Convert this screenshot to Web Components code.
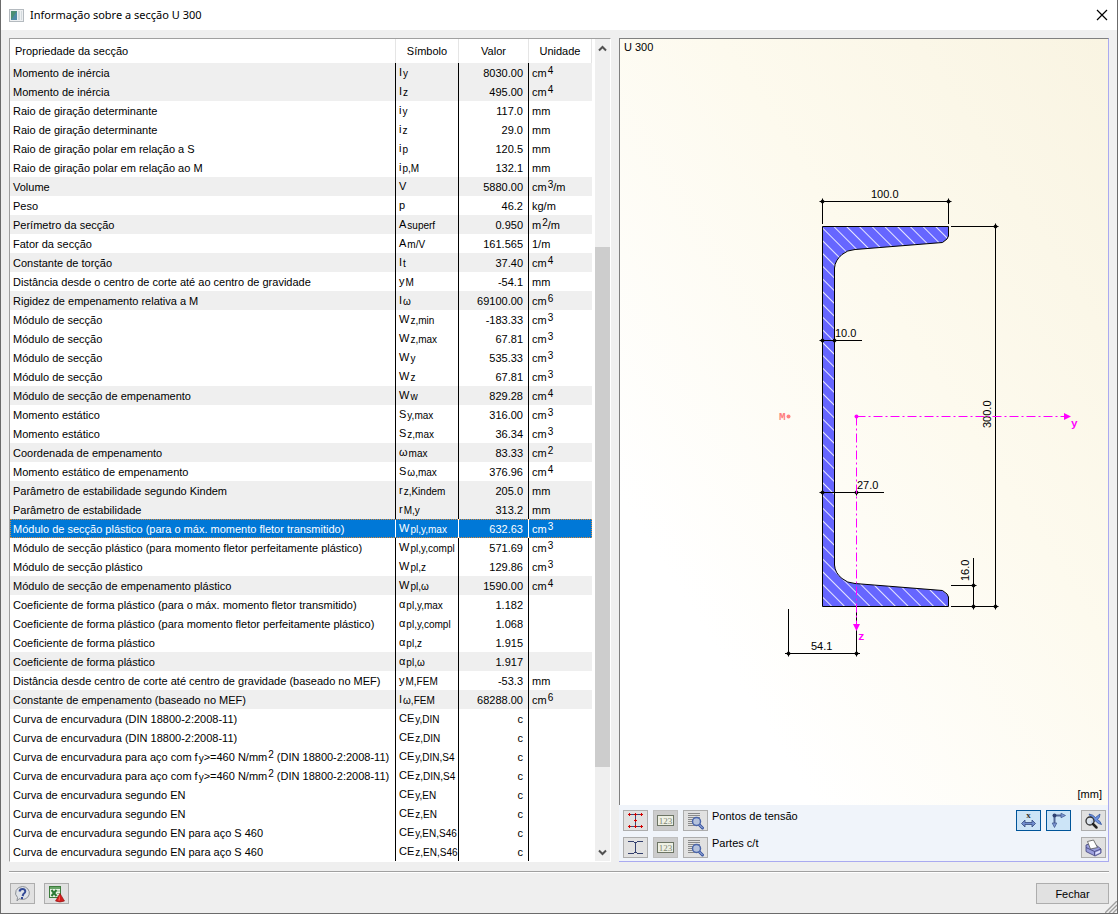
<!DOCTYPE html>
<html lang="pt">
<head>
<meta charset="utf-8">
<title>Informação sobre a secção U 300</title>
<style>
  html, body { height: 100%; }
  body { margin: 0; background: #efefef; color: #000; font: 11px/19px "Liberation Sans", Arial, sans-serif; }
</style>
</head>
<body>

<section-dialog heading="Informação sobre a secção U 300">
  <section-table slot="table"></section-table>
  <section-preview slot="preview" name="U 300" unit="[mm]"></section-preview>
  <tool-button slot="tools" label="Ajuda">
    <svg width="19" height="18" viewBox="0 0 19 18"><path d="M9.500 1.500a7 6.500 0 1 1-3.500 12.200L4 16l.5-3.500A7 6.500 0 0 1 9.500 1.500Z" fill="#dfe3e8" stroke="#8c9096"/><path d="M6.500 6.500Q7 4 9.500 4t2.800 2.200Q12.300 8 10.500 8.900L9.500 11" fill="none" stroke="#334a96" stroke-width="2"/><rect x="8" y="12" width="2" height="2" fill="#334a96"/></svg>
  </tool-button>
  <tool-button slot="tools" label="Exportar para Excel">
    <svg width="19" height="18" viewBox="0 0 19 18"><rect x="2.500" y="1.500" width="11" height="11" fill="#e8f2e4" stroke="#3d7d3d"/><rect x="3" y="2" width="10" height="2" fill="#68a568"/><path d="m4.500 5 5 6M9.500 5l-5 6" stroke="#2c7a35" stroke-width="2"/><path d="M10 6h3M10 8.500h3M10 11h3" stroke="#8dba88"/><path d="M13 8.500 17.500 16Q13 18 8.500 16Z" fill="#d41c1c" stroke="#871010" stroke-width=".6"/><path d="m12.800 10-1.500 5.500h1.500Z" fill="#ff6a60"/></svg>
  </tool-button>
</section-dialog>

<script>
/* Base class: opens a shadow root and fills it from the class's markup. */
class BaseElement extends HTMLElement {
  constructor() {
    super();
    this.attachShadow({ mode: "open" });
  }
  connectedCallback() {
    const template = document.createElement("template");
    template.innerHTML = this.markup();
    this.shadowRoot.replaceChildren(template.content.cloneNode(true));
  }
  markup() { return ""; }
}

/* Small square icon button; the icon is slotted in. */
class ToolButton extends BaseElement {
  markup() {
    const off = this.hasAttribute("disabled") ? "disabled" : "";
    const pressed = this.hasAttribute("pressed") ? 'aria-pressed="true"' : "";
    return `
      <style>
        :host { display: block; flex: none; }
        button { display: flex; align-items: center; justify-content: center; box-sizing: border-box; width: 25px; height: 21px; padding: 0; border: 1px solid #adadad; background: #e1e1e1; }
        button:disabled { background: #ccc; border-color: #bfbfbf; }
        button[aria-pressed] { background: #cce4f7; border-color: #005499; }
        ::slotted(svg) { display: block; }
      </style>
      <button type="button" aria-label="${this.getAttribute("label")}" ${pressed} ${off}><slot></slot></button>`;
  }
}
customElements.define("tool-button", ToolButton);

/* Vertical scroll bar beside the table. */
class ScrollRail extends BaseElement {
  markup() {
    return `
      <style>
        :host { display: grid; grid-template-rows: 19px minmax(0, 1fr) 17px; width: 15px; background: #efefef; }
        svg { display: block; margin: auto; }
        .track { display: grid; grid-template-rows: 189fr 521fr 77fr; }
        .thumb { grid-row: 2; background: #cdcdcd; }
      </style>
      <svg width="9" height="7" viewBox="0 0 9 7"><path d="M1 5.500 4.500 2 8 5.500" fill="none" stroke="#505050" stroke-width="2"/></svg>
      <div class="track"><div class="thumb"></div></div>
      <svg width="9" height="7" viewBox="0 0 9 7"><path d="M1 1.500 4.500 5 8 1.500" fill="none" stroke="#505050" stroke-width="2"/></svg>`;
  }
}
customElements.define("scroll-rail", ScrollRail);

/* name | symbol | value | unit | flags: g = grey band, s = selected.
   "_{…}" lowers and "^{…}" raises a run of text. */
const ROWS = `
Momento de inércia|I_{y}|8030.00|cm^{4}|g
Momento de inércia|I_{z}|495.00|cm^{4}|g
Raio de giração determinante|i_{y}|117.0|mm|
Raio de giração determinante|i_{z}|29.0|mm|
Raio de giração polar em relação a S|i_{p}|120.5|mm|
Raio de giração polar em relação ao M|i_{p,M}|132.1|mm|
Volume|V|5880.00|cm^{3}/m|g
Peso|p|46.2|kg/m|
Perímetro da secção|A_{superf}|0.950|m^{2}/m|g
Fator da secção|A_{m/V}|161.565|1/m|
Constante de torção|I_{t}|37.40|cm^{4}|g
Distância desde o centro de corte até ao centro de gravidade|y_{M}|-54.1|mm|
Rigidez de empenamento relativa a M|I_{ω}|69100.00|cm^{6}|g
Módulo de secção|W_{z,min}|-183.33|cm^{3}|
Módulo de secção|W_{z,max}|67.81|cm^{3}|
Módulo de secção|W_{y}|535.33|cm^{3}|
Módulo de secção|W_{z}|67.81|cm^{3}|
Módulo de secção de empenamento|W_{w}|829.28|cm^{4}|g
Momento estático|S_{y,max}|316.00|cm^{3}|
Momento estático|S_{z,max}|36.34|cm^{3}|
Coordenada de empenamento|ω_{max}|83.33|cm^{2}|g
Momento estático de empenamento|S_{ω,max}|376.96|cm^{4}|
Parâmetro de estabilidade segundo Kindem|r_{z,Kindem}|205.0|mm|g
Parâmetro de estabilidade|r_{M,y}|313.2|mm|g
Módulo de secção plástico (para o máx. momento fletor transmitido)|W_{pl,y,max}|632.63|cm^{3}|s
Módulo de secção plástico (para momento fletor perfeitamente plástico)|W_{pl,y,compl}|571.69|cm^{3}|
Módulo de secção plástico|W_{pl,z}|129.86|cm^{3}|
Módulo de secção de empenamento plástico|W_{pl,ω}|1590.00|cm^{4}|g
Coeficiente de forma plástico (para o máx. momento fletor transmitido)|α_{pl,y,max}|1.182||
Coeficiente de forma plástico (para momento fletor perfeitamente plástico)|α_{pl,y,compl}|1.068||
Coeficiente de forma plástico|α_{pl,z}|1.915||
Coeficiente de forma plástico|α_{pl,ω}|1.917||g
Distância desde centro de corte até centro de gravidade (baseado no MEF)|y_{M,FEM}|-53.3|mm|
Constante de empenamento (baseado no MEF)|I_{ω,FEM}|68288.00|cm^{6}|g
Curva de encurvadura (DIN 18800-2:2008-11)|CE_{y,DIN}|c||
Curva de encurvadura (DIN 18800-2:2008-11)|CE_{z,DIN}|c||
Curva de encurvadura para aço com f_{y}>=460 N/mm^{2} (DIN 18800-2:2008-11)|CE_{y,DIN,S4}|c||
Curva de encurvadura para aço com f_{y}>=460 N/mm^{2} (DIN 18800-2:2008-11)|CE_{z,DIN,S4}|c||
Curva de encurvadura segundo EN|CE_{y,EN}|c||
Curva de encurvadura segundo EN|CE_{z,EN}|c||
Curva de encurvadura segundo EN para aço S 460|CE_{y,EN,S46}|c||
Curva de encurvadura segundo EN para aço S 460|CE_{z,EN,S46}|c||`.trim().split("\n").map(line => line.split("|"));

const format = text => text
  .replace(/>/g, "&gt;")
  .replace(/_\{(.*?)\}/g, "<sub>$1</sub>")
  .replace(/\^\{(.*?)\}/g, "<sup>$1</sup>");

class SectionTable extends BaseElement {
  markup() {
    const body = ROWS.map(([name, symbol, value, unit, flag]) => `
      <tr class="${flag}"${flag === "s" ? ' aria-selected="true"' : ""}><td><div>${format(name)}</div></td><td class="sym"><div>${format(symbol)}</div></td><td class="num"><div>${value}</div></td><td><div>${format(unit)}</div></td></tr>`).join("");
    return `
      <style>
        :host { display: grid; grid-template-columns: minmax(0, 1fr) 15px; column-gap: 3px; box-sizing: border-box; background: #fff; border-top: 1px solid #a0a0a0; border-left: 1px solid #a0a0a0; border-right: 1px solid #fff; border-bottom: 1px solid #fff; }
        table { width: 100%; border-collapse: separate; border-spacing: 0; table-layout: fixed; }
        col.symbol { width: 63px; } col.value { width: 70px; } col.unit { width: 63px; }
        th { height: 24px; padding: 0; font-weight: 400; text-align: center; border-right: 1px solid #e5e5e5; }
        th:first-child { text-align: left; padding-left: 5px; }
        td { height: 19px; padding: 0 3px; border-right: 1px solid #000; white-space: nowrap; }
        td:first-child, td:last-child { padding-right: 0; }
        td:last-child { border-right: 0; }
        td div { height: 19px; line-height: 21px; }
        td.sym { padding-right: 0; }
        td.sym div { line-height: 19px; }
        td.num { text-align: right; padding-right: 5px; }
        .g td { background: #efefef; }
        .s td { background: #0078d7; color: #fff; border-right-color: #fff; }
        .s { outline: 1px dotted #d98a3c; outline-offset: -1px; }
        sub, sup { font-size: 10px; line-height: 1; margin-left: 1px; vertical-align: baseline; position: relative; }
        sub { top: 1px; }
        sup { top: -3px; }
      </style>
      <table>
        <colgroup><col><col class="symbol"><col class="value"><col class="unit"></colgroup>
        <thead><tr><th scope="col">Propriedade da secção</th><th scope="col">Símbolo</th><th scope="col">Valor</th><th scope="col">Unidade</th></tr></thead>
        <tbody>${body}</tbody>
      </table>
      <scroll-rail></scroll-rail>`;
  }
}
customElements.define("section-table", SectionTable);

/* Dimensioned drawing of the channel section. */
class SectionDrawing extends BaseElement {
  markup() {
    const tick = (x, y) => `<path d="M${x - 3} ${y}h6M${x} ${y - 3}v6"/><circle cx="${x}" cy="${y}" r="1.500" fill="#000"/>`;
    const ticks = [[822.5, 201.5], [948.5, 201.5], [995.5, 226.5], [995.5, 606.5], [973.5, 585.5], [973.5, 606.5],
      [822.5, 340.5], [834.5, 340.5], [822.5, 492.5], [856.5, 492.5], [788.5, 653.5], [856.5, 653.5]].map(p => tick(...p)).join("");
    return `
      <style>
        :host { display: block; background: linear-gradient(to top right, #ffffff 20%, #fdfaee 60%, #f9f4e2); }
        svg { display: block; width: 100%; height: auto; }
        text { font: 11px "Liberation Sans", Arial, sans-serif; }
        .axis text { font: bold 11px "Liberation Mono", "Courier New", monospace; }
      </style>
      <svg viewBox="620 39 488 766">
        <defs>
          <pattern id="hatch" width="9" height="9" patternUnits="userSpaceOnUse" patternTransform="translate(834.5 226.5) rotate(45)">
            <path d="M0 .5h9" stroke="#e6e6ff"/>
          </pattern>
          <path id="profile" d="M822.5 226.5h126v9.500l-1.500 3-4.500 3.500L855 249.500q-8 .5-13 5-7 6-7.500 13.500v297q.5 8 7.500 13.500 5 4.500 13 5l87.500 7 4.500 3.500 1.500 3v9.500h-126Z"/>
        </defs>
        <use href="#profile" fill="#6666ff"/>
        <use href="#profile" fill="url(#hatch)" stroke="#000"/>
        <g fill="none" stroke="#000">
          <path d="M820 201.500h131M822.500 202v22M948.500 202v22"/>
          <path d="M995.500 224v385M951 226.500h47M951 606.500h47"/>
          <path d="M973.500 558v51M951 585.500h25"/>
          <path d="M820 340.500h42M820 492.500h64"/>
          <path d="M788.500 609v47M856.500 607v49M785 653.500h75"/>
          ${ticks}
        </g>
        <text x="871" y="198">100.0</text>
        <text x="835" y="337">10.0</text>
        <text x="857" y="489">27.0</text>
        <text x="811" y="650">54.1</text>
        <text transform="translate(991 428) rotate(-90)">300.0</text>
        <text transform="translate(969 581) rotate(-90)">16.0</text>
        <g class="axis" fill="#ff00ff">
          <path d="M856.500 416.500H1065M856.500 416.500V625" fill="none" stroke="#ff00ff" stroke-dasharray="9 3 2 3"/>
          <circle cx="856.500" cy="416.500" r="2"/>
          <path d="M1064 413l7 3.500-7 3.500ZM853 624h7l-3.500 7Z"/>
          <text x="1071" y="427">y</text>
          <text x="858" y="640">z</text>
          <text x="779" y="420" fill="#ff8080">M</text>
          <circle cx="788.500" cy="416.500" r="2" fill="#ff8080"/>
        </g>
      </svg>`;
  }
}
customElements.define("section-drawing", SectionDrawing);

const ICONS = {
  points: `<svg width="17" height="17" viewBox="0 0 17 17"><path d="M1 2.500h15M1 14.500h15M8.500 2.500v12" stroke="#3a4a78" fill="none"/><path d="M1 2.500h3M2.500 1v3M7 2.500h3M8.500 1v3M13 2.500h3M14.500 1v3M1 14.500h3M2.500 13v3M7 14.500h3M8.500 13v3M13 14.500h3M14.500 13v3M7 8.500h3M8.500 7v3" stroke="#d00000"/></svg>`,
  parts: `<svg width="17" height="17" viewBox="0 0 17 17"><path d="M1 2.500h6M10 2.500h6M1 14.500h6M10 14.500h6M7 3.500h3M7 13.500h3M8.500 3.500v10" stroke="#34406e" fill="none"/></svg>`,
  numbers: `<svg width="17" height="12" viewBox="0 0 17 12"><rect x=".5" y=".5" width="16" height="10" fill="#eef0e4" stroke="#6c7464"/><text x="8.500" y="9" text-anchor="middle" font-family="Liberation Serif, serif" font-size="9" fill="#7c8474">123</text></svg>`,
  details: `<svg width="19" height="18" viewBox="0 0 19 18"><path d="M2 1.500h12M2 3.500h12M2 5.500h12M2 7.500h5M2 9.500h4M2 11.500h5M2 13.500h7" stroke="#8a8a8a"/><path d="m13.500 13 3 3" stroke="#3a55a0" stroke-width="3" stroke-linecap="round"/><path d="m13.500 13 3 3" stroke="#b9c8ee" stroke-linecap="round"/><circle cx="10.500" cy="9.500" r="4" fill="#b5c2dc" stroke="#4a65aa" stroke-width="1.500"/></svg>`,
  dims: `<svg width="17" height="17" viewBox="0 0 17 17"><text x="8.500" y="6" text-anchor="middle" font-family="Liberation Serif, serif" font-size="9" font-weight="700" fill="#333">x</text><path d="M1.500 11.500 5 8v2.500h7V8l3.500 3.500L12 15v-2.500H5V15Z" fill="#6f8ccd" stroke="#34497e" stroke-width=".8"/></svg>`,
  axes: `<svg width="17" height="17" viewBox="0 0 17 17"><path d="M4.500 3.500H12M4.500 3.500V12" stroke="#536898" stroke-width="2" fill="none"/><path d="M11 1.200 15.500 3.500 11 5.800ZM2.200 11h4.600l-2.300 4.500Z" fill="#7d97d3" stroke="#3b5189" stroke-width=".7"/><circle cx="4.500" cy="3.500" r="2" fill="#2f4273"/></svg>`,
  zoom: `<svg width="19" height="18" viewBox="0 0 19 18"><path d="M5 2q4 .5 6.500 3.500L16 2q0 3.500-2.500 5.500 3 1.500 4 5-3.500-.5-6-3.500L7 12q0-3.500 2.500-5Q6 5.500 5 2Z" fill="#6d91de" stroke="#2a4b96" stroke-width=".7"/><circle cx="6" cy="9" r="4" fill="#dbe4ee" fill-opacity=".8" stroke="#333" stroke-width="1.300"/><path d="m9 12 3.500 3.500" stroke="#222" stroke-width="2.500" stroke-linecap="round"/></svg>`,
  print: `<svg width="19" height="18" viewBox="0 0 19 18"><path d="m2 6 3-1 7 1 5 4v4l-6 3-9-4.500Z" fill="#9a9edc" stroke="#3d3f78" stroke-width=".8"/><path d="m2 8.500 8.500 4L17 10M10.500 12.500v4" fill="none" stroke="#3d3f78" stroke-width=".8"/><path d="M3.500 2.500 9.500 1l4 7.500L6.500 10Z" fill="#fff" stroke="#555" stroke-width=".8"/><path d="m11.500 13.500 4.500-2v2l-4.500 2Z" fill="#e4e6ff"/></svg>`
};

/* Preview panel: drawing on top, tool strip below. */
class SectionPreview extends BaseElement {
  markup() {
    return `
      <style>
        :host { display: flex; flex-direction: column; box-sizing: border-box; background: #f0f4fa; border-top: 1px solid #808080; border-right: 1px solid #aaaaf0; border-bottom: 1px solid #aaaaf0; }
        .canvas { position: relative; border-left: 1px solid #808080; flex: auto; }
        .name, .unit { position: absolute; line-height: 15px; }
        .name { top: 1px; left: 4px; }
        .unit { right: 6px; bottom: 3px; }
        .strip { display: flex; justify-content: space-between; padding: 5px 2px 3px 4px; }
        .left { display: grid; grid-template-columns: 25px 25px 24px auto; gap: 6px 5px; }
        .left span { line-height: 12px; }
        .right { display: grid; grid-template-columns: 25px 30px 25px; gap: 6px 5px; }
        .right :last-child { grid-column: 3; }
      </style>
      <div class="canvas">
        <section-drawing></section-drawing>
        <div class="name">${this.getAttribute("name")}</div>
        <div class="unit">${this.getAttribute("unit")}</div>
      </div>
      <div class="strip">
        <div class="left">
          <tool-button label="Mostrar pontos de tensão">${ICONS.points}</tool-button>
          <tool-button label="Numerar pontos de tensão" disabled>${ICONS.numbers}</tool-button>
          <tool-button label="Detalhes dos pontos de tensão">${ICONS.details}</tool-button>
          <span>Pontos de tensão</span>
          <tool-button label="Mostrar partes c/t">${ICONS.parts}</tool-button>
          <tool-button label="Numerar partes c/t" disabled>${ICONS.numbers}</tool-button>
          <tool-button label="Detalhes das partes c/t">${ICONS.details}</tool-button>
          <span>Partes c/t</span>
        </div>
        <div class="right">
          <tool-button label="Dimensões" pressed>${ICONS.dims}</tool-button>
          <tool-button label="Eixos" pressed>${ICONS.axes}</tool-button>
          <tool-button label="Ver tudo">${ICONS.zoom}</tool-button>
          <tool-button label="Imprimir">${ICONS.print}</tool-button>
        </div>
      </div>`;
  }
}
customElements.define("section-preview", SectionPreview);

/* Window frame with title bar, two panels and a footer. */
class SectionDialog extends BaseElement {
  markup() {
    return `
      <style>
        :host { display: flex; flex-direction: column; position: relative; box-sizing: border-box; min-height: 100%; border: 1px solid #6b6b6b; border-top: 0; background: #efefef; }
        header { display: flex; align-items: center; gap: 6px; height: 30px; padding: 0 8px; background: #fff; }
        h1 { margin: 0; flex: 1; font: 400 11px/30px "Noto Sans", "Segoe UI", sans-serif; }
        .close { width: 14px; height: 14px; padding: 0; border: 0; background: none; }
        .close svg, header svg { display: block; }
        main { display: grid; grid-template-columns: minmax(0, 602fr) minmax(0, 490fr); column-gap: 8px; padding: 8px 8px 9px; }
        footer { display: flex; gap: 9px; margin: 0 8px; padding: 11px 0 9px 1px; border-top: 1px solid #a0a0a0; box-shadow: inset 0 1px #fff; }
        .ok { margin-left: auto; box-sizing: border-box; width: 73px; height: 21px; padding: 0; border: 1px solid #adadad; background: #e1e1e1; color: #000; font: 11px "Liberation Sans", Arial, sans-serif; }
        .grip { position: absolute; right: 0; bottom: 0; }
      </style>
      <header>
        <svg width="15" height="13" viewBox="0 0 15 13"><rect x=".5" y=".5" width="14" height="12" fill="#eef0f2" stroke="#b4babf"/><rect x="2" y="2" width="6" height="9" fill="#4f8aa5"/><path d="M2 2h6L2 11Z" fill="#4c8f72"/><rect x="9" y="2" width="2" height="9" fill="#d3dadd"/><rect x="12" y="2" width="1" height="9" fill="#d3dadd"/></svg>
        <h1>${this.getAttribute("heading")}</h1>
        <button class="close" type="button" aria-label="Fechar janela"><svg width="14" height="14" viewBox="0 0 14 14"><path d="m2 2 10 10M12 2 2 12" stroke="#000" stroke-width="1.200"/></svg></button>
      </header>
      <main><slot name="table"></slot><slot name="preview"></slot></main>
      <footer><slot name="tools"></slot><button class="ok" type="button">Fechar</button></footer>
      <svg class="grip" width="12" height="12" viewBox="0 0 12 12"><path d="M0 12 12 0M4 12l8-8M8 12l4-4" stroke="#a0a0a0" stroke-width="1.400"/></svg>`;
  }
}
customElements.define("section-dialog", SectionDialog);
</script>
</body>
</html>
